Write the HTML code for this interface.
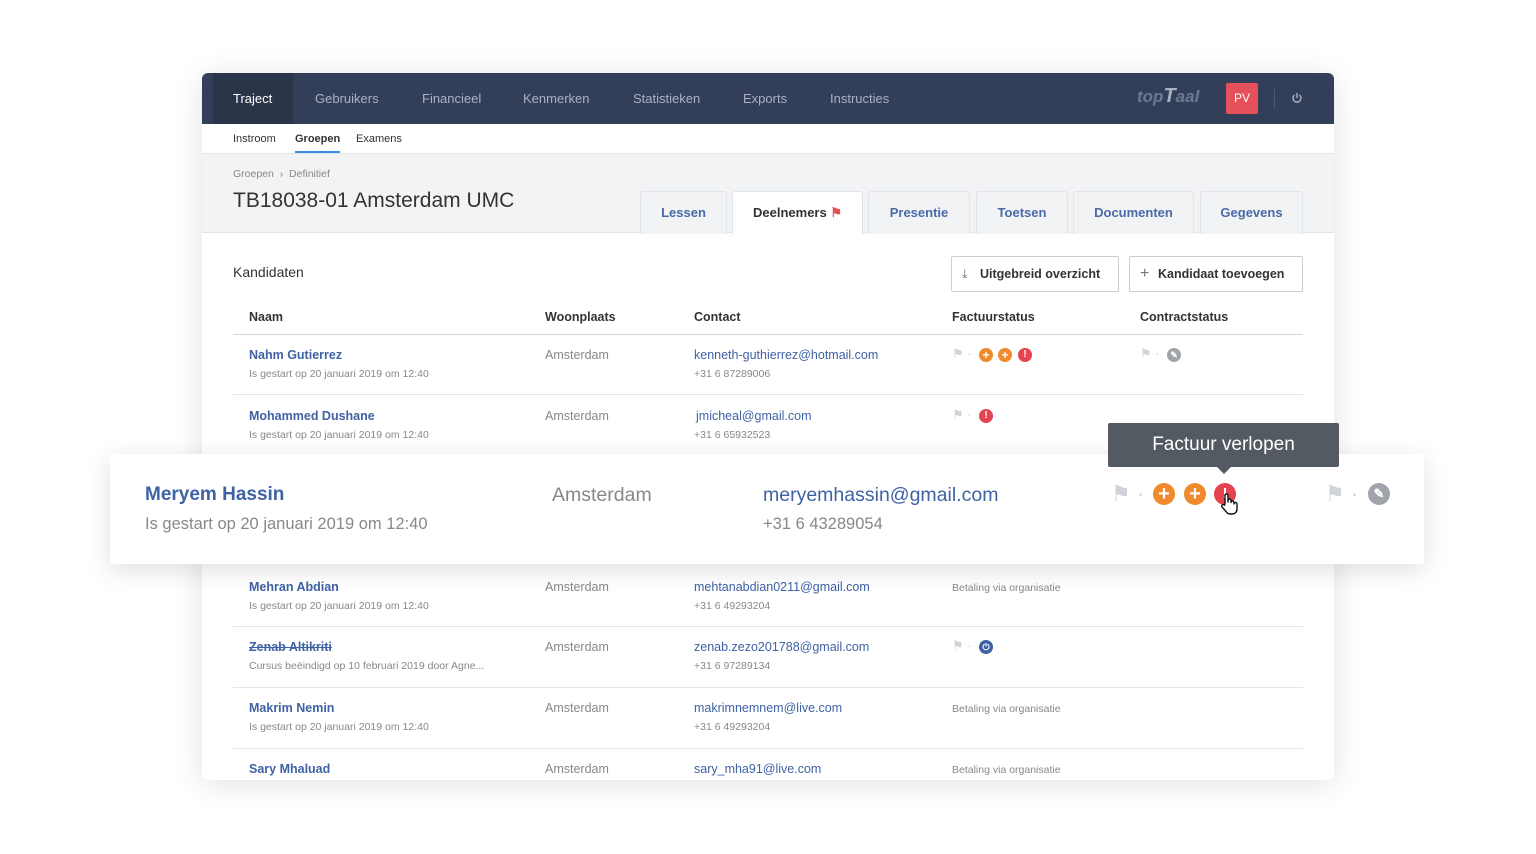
<!DOCTYPE html>
<html><head><meta charset="utf-8"><style>
*{box-sizing:border-box;margin:0;padding:0}
body{width:1536px;height:854px;background:#fff;font-family:"Liberation Sans",sans-serif;position:relative;overflow:hidden;color:#333}
.a{position:absolute;white-space:nowrap}
.card{position:absolute;left:202px;top:73px;width:1132px;height:707px;border-radius:6px;background:#fff;box-shadow:0 4px 30px rgba(0,0,0,.12);overflow:hidden}
.nav{position:absolute;left:0;top:0;width:1132px;height:51px;background:#333f58}
.nav span{position:absolute;top:18px;font-size:13px;color:#a9b2c3}
.gray{position:absolute;left:0;top:80px;width:1132px;height:80px;background:#f2f3f5;border-top:1px solid #e3e5e9;border-bottom:1px solid #e3e5e9}
.tab{position:absolute;top:118px;height:43px;background:#f2f3f5;border:1px solid #e1e4e8;border-bottom:none;border-radius:3px 3px 0 0;font-size:13px;font-weight:bold;color:#4a6aa8;text-align:center;line-height:42px}
.btn{position:absolute;top:183px;height:36px;border:1px solid #c9ced6;border-radius:2px;font-size:13px;font-weight:bold;color:#333;line-height:34px;padding-left:28px}
.th{position:absolute;top:237px;font-size:12.5px;font-weight:bold;color:#333}
.ln{position:absolute;left:31px;width:1070px;height:1px;background:#e3e5e9}
.nm{font-size:12.5px;font-weight:bold;color:#3f62a5}
.sb{font-size:10.5px;color:#888}
.ct{font-size:12.5px;color:#3f62a5}
.am{font-size:12.5px;color:#888}
.ic{position:absolute;border-radius:50%;color:#fff;text-align:center;font-weight:bold}
</style></head><body>
<div class="card">
 <div class="nav">
  <div class="a" style="left:11px;top:0;width:80px;height:51px;background:#2a3549"></div>
  <span style="left:31px;color:#fff">Traject</span>
  <span style="left:113px">Gebruikers</span>
  <span style="left:220px">Financieel</span>
  <span style="left:321px">Kenmerken</span>
  <span style="left:431px">Statistieken</span>
  <span style="left:541px">Exports</span>
  <span style="left:628px">Instructies</span>
  <span style="left:935px;top:12px;font-size:17px;font-style:italic;font-weight:bold;color:#6b7a94">top<span style="position:static;font-size:20px">T</span>aal</span>
  <div class="a" style="left:1024px;top:10px;width:32px;height:31px;background:#e5505a;border-radius:2px;color:#fff;font-size:12px;line-height:31px;text-align:center">PV</div>
  <div class="a" style="left:1072px;top:16px;width:1px;height:20px;background:#4d5a73"></div>
  <svg class="a" style="left:1089px;top:19px" width="12" height="12" viewBox="0 0 12 12"><path d="M3.5 3a4 4 0 1 0 5 0" fill="none" stroke="#a9b2c3" stroke-width="1.4"/><path d="M6 1v5" stroke="#a9b2c3" stroke-width="1.4"/></svg>
 </div>
 <div class="a" style="left:31px;top:60px;font-size:11px;color:#333">Instroom</div>
 <div class="a" style="left:93px;top:60px;font-size:11px;color:#333;font-weight:bold">Groepen</div>
 <div class="a" style="left:93px;top:78px;width:45px;height:2px;background:#3a8ee6"></div>
 <div class="a" style="left:154px;top:60px;font-size:11px;color:#333">Examens</div>
 <div class="gray"></div>
 <div class="a" style="left:31px;top:95px;font-size:10.5px;color:#888">Groepen &nbsp;›&nbsp; Definitief</div>
 <div class="a" style="left:31px;top:116px;font-size:21px;color:#333">TB18038-01 Amsterdam UMC</div>
 <div class="tab" style="left:438px;width:87px">Lessen</div>
 <div class="tab" style="left:530px;width:131px;background:#fff;color:#333;height:44px">Deelnemers <span style="color:#e5505a">⚑</span></div>
 <div class="tab" style="left:666px;width:102px">Presentie</div>
 <div class="tab" style="left:774px;width:92px">Toetsen</div>
 <div class="tab" style="left:871px;width:121px">Documenten</div>
 <div class="tab" style="left:998px;width:103px">Gegevens</div>
 <div class="a" style="left:31px;top:191px;font-size:14px;color:#333">Kandidaten</div>
 <div class="btn" style="left:749px;width:168px;font-size:12.5px"><span class="a" style="left:10px;top:0;color:#777;font-weight:normal">⤓</span>Uitgebreid overzicht</div>
 <div class="btn" style="left:927px;width:174px;font-size:12.5px"><span class="a" style="left:10px;top:0;color:#777;font-weight:normal;font-size:16px">+</span>Kandidaat toevoegen</div>
 <div class="th" style="left:47px">Naam</div><div class="th" style="left:343px">Woonplaats</div><div class="th" style="left:492px">Contact</div><div class="th" style="left:750px">Factuurstatus</div><div class="th" style="left:938px">Contractstatus</div>
 <div class="ln" style="top:261px;background:#cfd3da"></div>
 <div class="a nm" style="left:47px;top:275px">Nahm Gutierrez</div><div class="a sb" style="left:47px;top:295px">Is gestart op 20 januari 2019 om 12:40</div>
 <div class="a am" style="left:343px;top:275px">Amsterdam</div><div class="a ct" style="left:492px;top:275px">kenneth-guthierrez@hotmail.com</div><div class="a sb" style="left:492px;top:295px">+31 6 87289006</div>
 <div class="a" style="left:750px;top:273px;font-size:13px;color:#d0d3d8">⚑ ·</div>
 <div class="ic" style="left:777px;top:275px;width:14px;height:14px;background:#f08a2c;font-size:12px;line-height:14px">+</div>
 <div class="ic" style="left:796px;top:275px;width:14px;height:14px;background:#f08a2c;font-size:12px;line-height:14px">+</div>
 <div class="ic" style="left:816px;top:275px;width:14px;height:14px;background:#e5434f;font-size:10px;line-height:14px">!</div>
 <div class="a" style="left:938px;top:273px;font-size:13px;color:#d0d3d8">⚑ ·</div>
 <div class="ic" style="left:965px;top:275px;width:14px;height:14px;background:#a0a4aa;font-size:9px;line-height:14px">✎</div>
 <div class="ln" style="top:321px"></div>
 <div class="a nm" style="left:47px;top:336px">Mohammed Dushane</div><div class="a sb" style="left:47px;top:356px">Is gestart op 20 januari 2019 om 12:40</div>
 <div class="a am" style="left:343px;top:336px">Amsterdam</div><div class="a ct" style="left:494px;top:336px">jmicheal@gmail.com</div><div class="a sb" style="left:492px;top:356px">+31 6 65932523</div>
 <div class="a" style="left:750px;top:334px;font-size:13px;color:#d0d3d8">⚑ ·</div>
 <div class="ic" style="left:777px;top:336px;width:14px;height:14px;background:#e5434f;font-size:10px;line-height:14px">!</div>
 <div class="a nm" style="left:47px;top:507px">Mehran Abdian</div><div class="a sb" style="left:47px;top:527px">Is gestart op 20 januari 2019 om 12:40</div>
 <div class="a am" style="left:343px;top:507px">Amsterdam</div><div class="a ct" style="left:492px;top:507px">mehtanabdian0211@gmail.com</div><div class="a sb" style="left:492px;top:527px">+31 6 49293204</div>
 <div class="a sb" style="left:750px;top:509px">Betaling via organisatie</div>
 <div class="ln" style="top:553px"></div>
 <div class="a nm" style="left:47px;top:567px;text-decoration:line-through">Zenab Altikriti</div><div class="a sb" style="left:47px;top:587px">Cursus beëindigd op 10 februari 2019 door Agne...</div>
 <div class="a am" style="left:343px;top:567px">Amsterdam</div><div class="a ct" style="left:492px;top:567px">zenab.zezo201788@gmail.com</div><div class="a sb" style="left:492px;top:587px">+31 6 97289134</div>
 <div class="a" style="left:750px;top:565px;font-size:13px;color:#d0d3d8">⚑ ·</div>
 <div class="ic" style="left:777px;top:567px;width:14px;height:14px;background:#3f62a5;font-size:9px;line-height:14px">⏻</div>
 <div class="ln" style="top:614px"></div>
 <div class="a nm" style="left:47px;top:628px">Makrim Nemin</div><div class="a sb" style="left:47px;top:648px">Is gestart op 20 januari 2019 om 12:40</div>
 <div class="a am" style="left:343px;top:628px">Amsterdam</div><div class="a ct" style="left:492px;top:628px">makrimnemnem@live.com</div><div class="a sb" style="left:492px;top:648px">+31 6 49293204</div>
 <div class="a sb" style="left:750px;top:630px">Betaling via organisatie</div>
 <div class="ln" style="top:675px"></div>
 <div class="a nm" style="left:47px;top:689px">Sary Mhaluad</div>
 <div class="a am" style="left:343px;top:689px">Amsterdam</div><div class="a ct" style="left:492px;top:689px">sary_mha91@live.com</div>
 <div class="a sb" style="left:750px;top:691px">Betaling via organisatie</div>
</div>
<div class="a" style="left:110px;top:454px;width:1314px;height:110px;background:#fff;box-shadow:0 6px 24px rgba(0,0,0,.13)">
 <div class="a" style="left:35px;top:30px;font-size:19px;font-weight:bold;color:#3f62a5">Meryem Hassin</div>
 <div class="a" style="left:35px;top:61px;font-size:16.5px;color:#888">Is gestart op 20 januari 2019 om 12:40</div>
 <div class="a" style="left:442px;top:30px;font-size:19.5px;color:#888">Amsterdam</div>
 <div class="a" style="left:653px;top:30px;font-size:19.5px;color:#3f62a5">meryemhassin@gmail.com</div>
 <div class="a" style="left:653px;top:61px;font-size:16.5px;color:#888">+31 6 43289054</div>
 <div class="a" style="left:1001px;top:27px;font-size:22px;color:#d0d3d8">⚑ ·</div>
 <div class="ic" style="left:1043px;top:29px;width:22px;height:22px;background:#f08a2c;font-size:20px;line-height:22px">+</div>
 <div class="ic" style="left:1074px;top:29px;width:22px;height:22px;background:#f08a2c;font-size:20px;line-height:22px">+</div>
 <div class="ic" style="left:1104px;top:29px;width:22px;height:22px;background:#e5434f;font-size:15px;line-height:22px">!</div>
 <svg class="a" style="left:1109px;top:38px" width="22" height="24" viewBox="0 0 22 24"><path d="M6 12V3.5a1.5 1.5 0 0 1 3 0V10V8.5a1.5 1.5 0 0 1 3 0V10.5a1.5 1.5 0 0 1 3 0V12a1.5 1.5 0 0 1 3 0v5c0 3-2 5-5 5h-2c-2 0-3-1-4-2.5L3 15a1.5 1.5 0 0 1 2.5-1.8z" fill="#fff" stroke="#111" stroke-width="1.4" stroke-linejoin="round"/></svg>
 <div class="a" style="left:1215px;top:27px;font-size:22px;color:#d0d3d8">⚑ ·</div>
 <div class="ic" style="left:1258px;top:29px;width:22px;height:22px;background:#a0a4aa;font-size:13px;line-height:22px">✎</div>
</div>
<div class="a" style="left:1108px;top:423px;width:231px;height:44px;background:#535a62;border-radius:2px;color:#fff;font-size:19px;line-height:44px;text-align:center">Factuur verlopen</div>
<div class="a" style="left:1217px;top:467px;width:0;height:0;border-left:7px solid transparent;border-right:7px solid transparent;border-top:7px solid #535a62"></div>
</body></html>
